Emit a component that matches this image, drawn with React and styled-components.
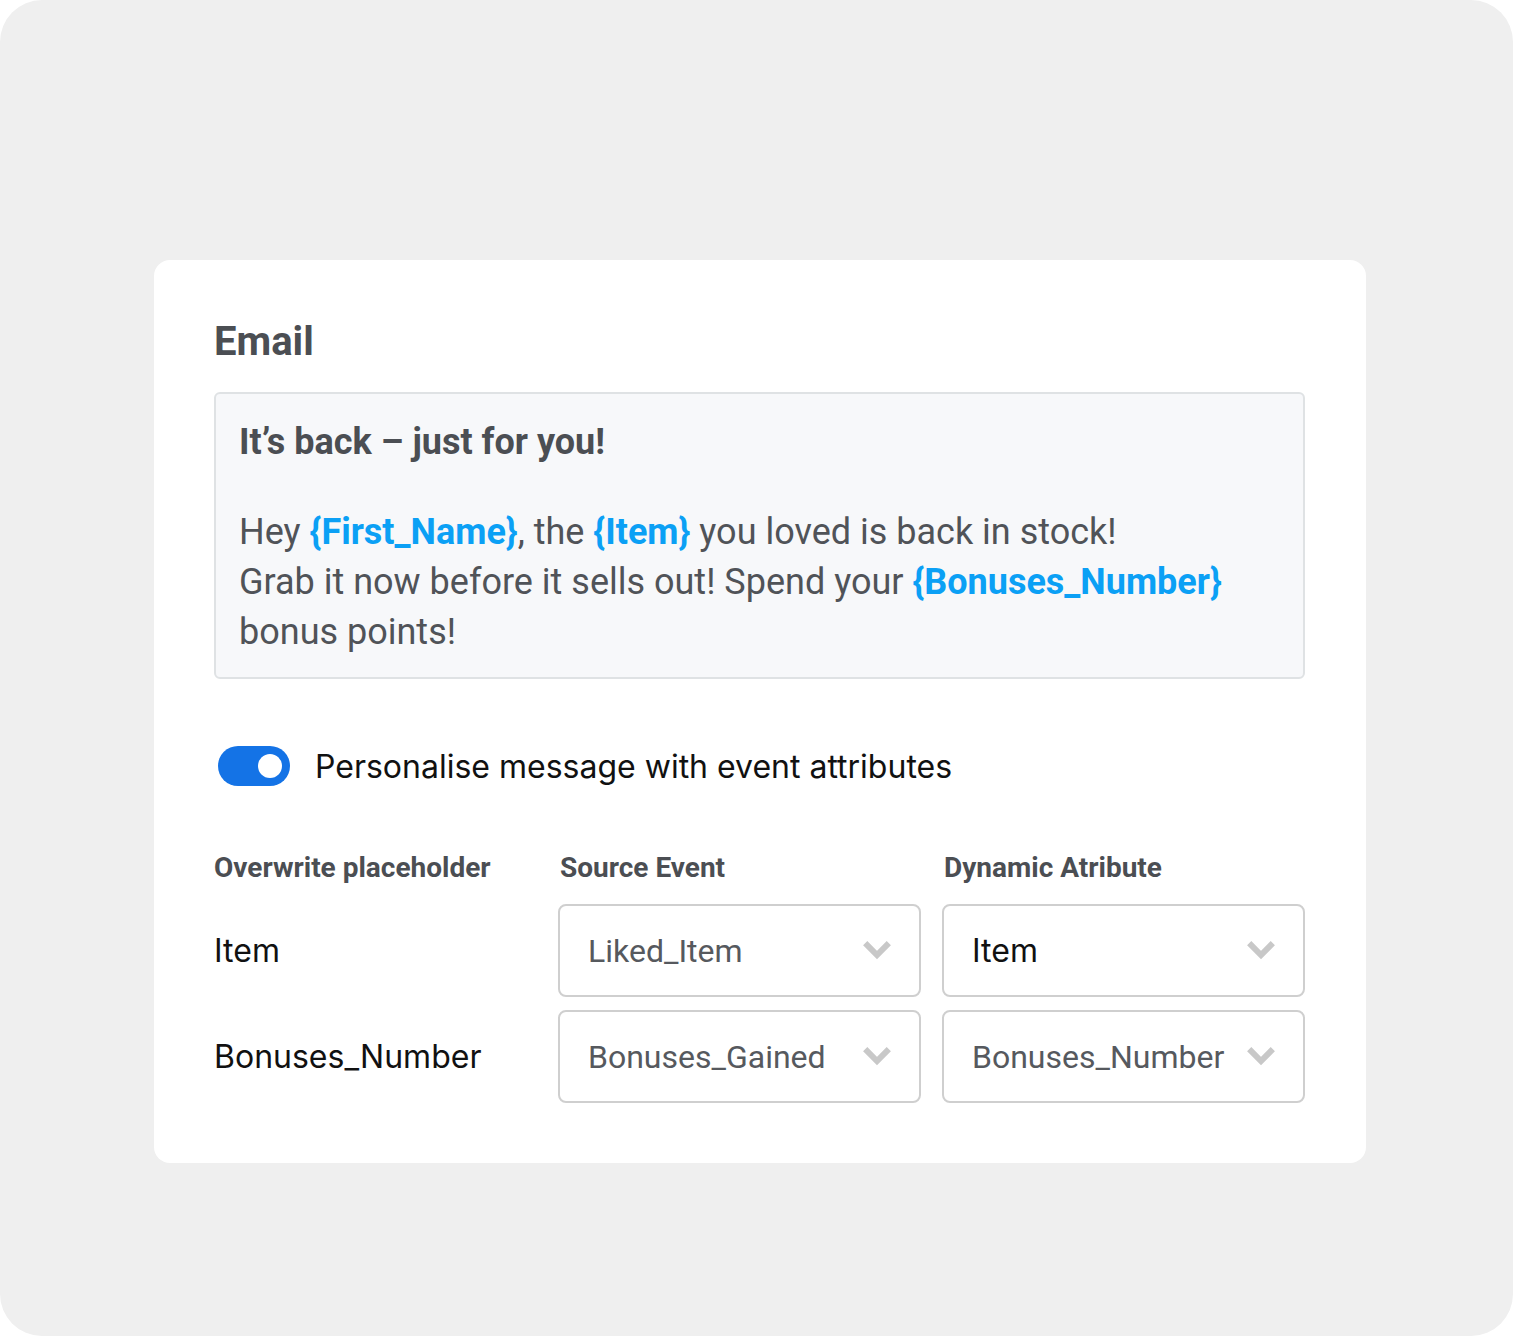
import React from "react"
import styled, { createGlobalStyle } from "styled-components"

const GlobalStyle = createGlobalStyle`
  html, body {
    margin: 0;
    padding: 0;
    background: #ffffff;
  }
`

const Canvas = styled.div`
  width: 1513px;
  height: 1336px;
  box-sizing: border-box;
  background: #efefef;
  border-radius: 42px;
  padding: 260px 147px 0 154px;
`

const Card = styled.div`
  background: #ffffff;
  border-radius: 16px;
  padding: 60px 61px 60px 60px;
  font-family: Roboto, "Liberation Sans", sans-serif;
`

const Title = styled.h1`
  margin: 0 0 28px 0;
  font-size: 40px;
  line-height: 44px;
  font-weight: 700;
  color: #4b4e53;
`

const MessageBox = styled.div`
  background: #f7f8fa;
  border: 2px solid #dfe2e4;
  border-radius: 6px;
  padding: 26px 24px 20px 23px;
  color: #505358;
`

const Subject = styled.div`
  font-size: 36px;
  line-height: 44px;
  font-weight: 700;
  color: #4b4e53;
  margin-bottom: 43px;
`

const Body = styled.p`
  margin: 0;
  font-size: 36px;
  line-height: 50px;
  font-weight: 400;
`

const Token = styled.span`
  color: #0ba0f5;
  font-weight: 700;
`

const ToggleRow = styled.label`
  display: flex;
  align-items: center;
  gap: 25px;
  margin: 67px 0 0 4px;
`

const Switch = styled.span`
  display: flex;
  align-items: center;
  justify-content: ${p => (p.$on ? "flex-end" : "flex-start")};
  width: 72px;
  height: 40px;
  box-sizing: border-box;
  padding: 0 8px;
  border-radius: 20px;
  background: ${p => (p.$on ? "#1473e6" : "#c5c7ca")};
`

const Knob = styled.span`
  width: 24px;
  height: 24px;
  border-radius: 50%;
  background: #ffffff;
`

const ToggleLabel = styled.span`
  font-family: Inter, "Liberation Sans", sans-serif;
  font-size: 32px;
  color: #111111;
`

const Grid = styled.div`
  display: grid;
  grid-template-columns: 323px 363px 363px;
  column-gap: 21px;
  align-items: center;
  margin-top: 66px;
`

const HeadCell = styled.div`
  font-size: 28px;
  line-height: 32px;
  font-weight: 700;
  color: #4b4e53;
  margin-bottom: 20px;
  padding-left: ${p => p.$indent || 0}px;
`

const RowLabel = styled.div`
  font-family: Inter, "Liberation Sans", sans-serif;
  font-size: 32px;
  color: #111111;
  margin-top: ${p => (p.$second ? 13 : 0)}px;
`

const Select = styled.div`
  display: flex;
  align-items: center;
  justify-content: space-between;
  height: 93px;
  box-sizing: border-box;
  border: 2px solid #cfcfcf;
  border-radius: 8px;
  padding: 0 28px 0 28px;
  margin-top: ${p => (p.$second ? 13 : 0)}px;
`

const SelectValue = styled.span`
  font-family: ${p => (p.$set ? 'Inter, "Liberation Sans", sans-serif' : 'Roboto, "Liberation Sans", sans-serif')};
  font-size: 32px;
  color: ${p => (p.$set ? "#111111" : "#56595e")};
`

const Chevron = () => (
  <svg width="28" height="19" viewBox="0 0 28 19" fill="none">
    <path d="M2.2 2.2 L14 14 L25.8 2.2" stroke="#c8c8c8" strokeWidth="6" strokeLinejoin="miter" />
  </svg>
)

const Dropdown = ({ value, set, second }) => (
  <Select $second={second}>
    <SelectValue $set={set}>{value}</SelectValue>
    <Chevron />
  </Select>
)

const App = () => {
  return (
    <>
      <GlobalStyle />
      <Canvas>
        <Card>
          <Title>Email</Title>
          <MessageBox>
            <Subject>It’s back – just for you!</Subject>
            <Body>
              Hey <Token>{"{First_Name}"}</Token>, the <Token>{"{Item}"}</Token> you loved is back in stock!
              <br />
              Grab it now before it sells out! Spend your <Token>{"{Bonuses_Number}"}</Token>
              <br />
              bonus points!
            </Body>
          </MessageBox>

          <ToggleRow>
            <Switch $on>
              <Knob />
            </Switch>
            <ToggleLabel>Personalise message with event attributes</ToggleLabel>
          </ToggleRow>

          <Grid>
            <HeadCell>Overwrite placeholder</HeadCell>
            <HeadCell $indent={2}>Source Event</HeadCell>
            <HeadCell $indent={2}>Dynamic Atribute</HeadCell>

            <RowLabel>Item</RowLabel>
            <Dropdown value="Liked_Item" />
            <Dropdown value="Item" set />

            <RowLabel $second>Bonuses_Number</RowLabel>
            <Dropdown value="Bonuses_Gained" second />
            <Dropdown value="Bonuses_Number" second />
          </Grid>
        </Card>
      </Canvas>
    </>
  )
}

export default App
